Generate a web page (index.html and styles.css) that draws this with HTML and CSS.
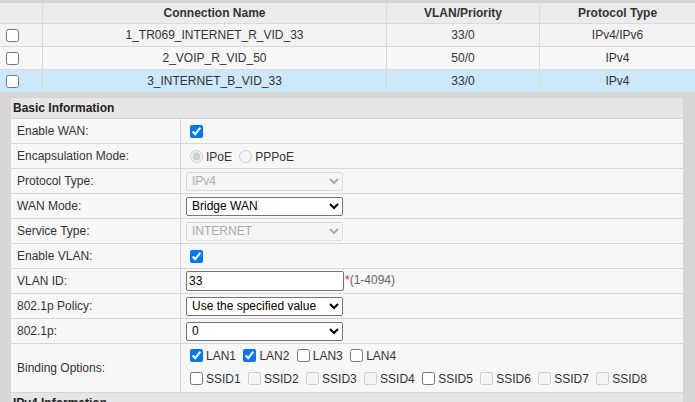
FILE: index.html
```html
<!DOCTYPE html>
<html>
<head>
<meta charset="utf-8">
<link rel="stylesheet" href="styles.css">
</head>
<body>
<div class="page">
  <table class="list">
    <tr class="head">
      <th class="c-chk"></th>
      <th class="c-name">Connection Name</th>
      <th class="c-vlan">VLAN/Priority</th>
      <th class="c-proto">Protocol Type</th>
    </tr>
    <tr class="odd">
      <td class="c-chk"><input type="checkbox"></td>
      <td>1_TR069_INTERNET_R_VID_33</td>
      <td>33/0</td>
      <td>IPv4/IPv6</td>
    </tr>
    <tr class="even">
      <td class="c-chk"><input type="checkbox"></td>
      <td>2_VOIP_R_VID_50</td>
      <td>50/0</td>
      <td>IPv4</td>
    </tr>
    <tr class="selected">
      <td class="c-chk"><input type="checkbox"></td>
      <td>3_INTERNET_B_VID_33</td>
      <td>33/0</td>
      <td>IPv4</td>
    </tr>
  </table>

  <div class="panel">
    <div class="section">Basic Information</div>
    <table class="form">
      <tr><td class="lbl">Enable WAN:</td><td class="val"><input type="checkbox" checked></td></tr>
      <tr><td class="lbl">Encapsulation Mode:</td><td class="val"><label class="opt"><input type="radio" name="enc" checked disabled>IPoE</label> <label class="opt"><input type="radio" name="enc" disabled>PPPoE</label></td></tr>
      <tr><td class="lbl">Protocol Type:</td><td class="val"><select class="sel" disabled><option>IPv4</option></select></td></tr>
      <tr><td class="lbl">WAN Mode:</td><td class="val"><select class="sel"><option>Bridge WAN</option></select></td></tr>
      <tr><td class="lbl">Service Type:</td><td class="val"><select class="sel" disabled><option>INTERNET</option></select></td></tr>
      <tr><td class="lbl">Enable VLAN:</td><td class="val"><input type="checkbox" checked></td></tr>
      <tr><td class="lbl">VLAN ID:</td><td class="val"><input class="txt" type="text" value="33"><span class="req">*</span><span class="hint">(1-4094)</span></td></tr>
      <tr><td class="lbl">802.1p Policy:</td><td class="val"><select class="sel"><option>Use the specified value</option></select></td></tr>
      <tr><td class="lbl">802.1p:</td><td class="val"><select class="sel"><option>0</option></select></td></tr>
      <tr class="bind"><td class="lbl">Binding Options:</td><td class="val">
        <div class="line"><label class="opt"><input type="checkbox" checked>LAN1</label> <label class="opt"><input type="checkbox" checked>LAN2</label> <label class="opt"><input type="checkbox">LAN3</label> <label class="opt"><input type="checkbox">LAN4</label></div>
        <div class="line"><label class="opt"><input type="checkbox">SSID1</label> <label class="opt"><input type="checkbox" disabled>SSID2</label> <label class="opt"><input type="checkbox" disabled>SSID3</label> <label class="opt"><input type="checkbox" disabled>SSID4</label> <label class="opt"><input type="checkbox">SSID5</label> <label class="opt"><input type="checkbox" disabled>SSID6</label> <label class="opt"><input type="checkbox" disabled>SSID7</label> <label class="opt"><input type="checkbox" disabled>SSID8</label></div>
      </td></tr>
    </table>
    <div class="section">IPv4 Information</div>
  </div>
</div>
</body>
</html>
```

FILE: styles.css
```css
html, body {
  margin: 0;
  padding: 0;
  background: #d6d6d6;
  font-family: "Liberation Sans", Arial, sans-serif;
  font-size: 12px;
  color: #333;
  overflow: hidden;
}
.page {
  padding-top: 3px;
}
.list {
  width: 695px;
  border-collapse: collapse;
  table-layout: fixed;
}
.list th, .list td {
  border: 1px solid #dadada;
  text-align: center;
  padding: 0;
  white-space: nowrap;
}
.list tr:first-child th { border-top: none; }
.list th:first-child, .list td:first-child { border-left: none; }
.list th:last-child, .list td:last-child { border-right: none; }
.list th {
  height: 20px;
  font-weight: bold;
  background: #ebebeb;
  color: #333;
}
.list td {
  height: 22px;
}
.list .c-chk { width: 42px; text-align: left; }
.list .c-chk input { margin: 3px 3px 3px 6px; vertical-align: middle; }
.list .c-name { width: 343px; }
.list .c-vlan { width: 152px; }
.list tr.odd td { background: #f3f3f3; }
.list tr.even td { background: #f7f7f7; }
.list tr.selected td { background: #cce8fb; }

.panel {
  margin: 5px 12px 0 11px;
  background: #f7f7f7;
}
.section {
  height: 20px;
  line-height: 20px;
  padding-left: 2px;
  font-weight: bold;
  background: #e6e6e6;
  border-bottom: 1px solid #d6d6d6;
  color: #222;
}
.form {
  width: 100%;
  border-collapse: collapse;
}
.form td {
  height: 24px;
  padding: 0;
  border-bottom: 1px solid #d6d6d6;
  background: #f7f7f7;
}
.form .lbl {
  width: 163px;
  padding-left: 6px;
  border-right: 1px solid #d6d6d6;
}
.form .val {
  padding-left: 5px;
}
.form input[type=checkbox], .form input[type=radio] {
  margin: 3px 3px 3px 4px;
  vertical-align: -2px;
}
.sel {
  width: 157px;
  height: 19px;
  font-family: "Liberation Sans", Arial, sans-serif;
  font-size: 12px;
  color: #000;
  vertical-align: middle;
  padding: 0 0 0 1px;
}
.sel:disabled { color: #8a8a8a; }
.txt {
  width: 152px;
  height: 16px;
  font-family: "Liberation Sans", Arial, sans-serif;
  font-size: 12px;
  padding: 1px 2px;
  margin: 0;
  vertical-align: middle;
  border: 1px solid #767676;
  border-radius: 2px;
}
.req { color: #e0261a; margin-left: 1px; }
.hint { color: #666; }
.opt { white-space: nowrap; }
.bind td { height: 48px; }
.bind .line { height: 23px; line-height: 23px; }
```
